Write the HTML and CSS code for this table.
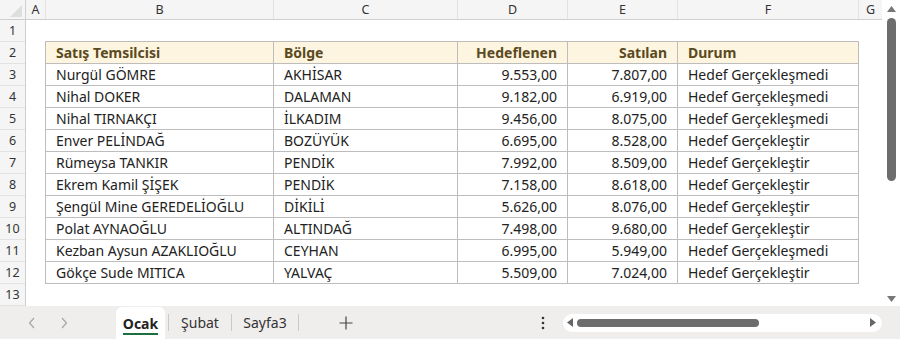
FILE: index.html
```html
<!DOCTYPE html>
<html lang="tr">
<head>
<meta charset="utf-8">
<link rel="stylesheet" href="styles.css">
</head>
<body>
<div class="app">
  <div class="top">
    <div class="grid">
      <div class="colheads">
        <div class="corner"><svg width="14" height="14" viewBox="0 0 14 14"><polygon points="13,1 13,13 1,13" fill="#dedede"/></svg></div>
        <div class="ch w-a">A</div>
        <div class="ch w-b">B</div>
        <div class="ch w-c">C</div>
        <div class="ch w-d">D</div>
        <div class="ch w-e">E</div>
        <div class="ch w-f">F</div>
        <div class="ch w-g">G</div>
      </div>
      <div class="body">
        <div class="rowheads">
          <div class="rh">1</div><div class="rh">2</div><div class="rh">3</div><div class="rh">4</div>
          <div class="rh">5</div><div class="rh">6</div><div class="rh">7</div><div class="rh">8</div>
          <div class="rh">9</div><div class="rh">10</div><div class="rh">11</div><div class="rh">12</div>
          <div class="rh">13</div>
        </div>
        <div class="cells">
          <div class="data">
            <div class="c hd">Satış Temsilcisi</div><div class="c hd">Bölge</div><div class="c hd num">Hedeflenen</div><div class="c hd num">Satılan</div><div class="c hd">Durum</div>
            <div class="c">Nurgül GÖMRE</div><div class="c">AKHİSAR</div><div class="c num">9.553,00</div><div class="c num">7.807,00</div><div class="c">Hedef Gerçekleşmedi</div>
            <div class="c">Nihal DOKER</div><div class="c">DALAMAN</div><div class="c num">9.182,00</div><div class="c num">6.919,00</div><div class="c">Hedef Gerçekleşmedi</div>
            <div class="c">Nihal TIRNAKÇI</div><div class="c">İLKADIM</div><div class="c num">9.456,00</div><div class="c num">8.075,00</div><div class="c">Hedef Gerçekleşmedi</div>
            <div class="c">Enver PELİNDAĞ</div><div class="c">BOZÜYÜK</div><div class="c num">6.695,00</div><div class="c num">8.528,00</div><div class="c">Hedef Gerçekleştir</div>
            <div class="c">Rümeysa TANKIR</div><div class="c">PENDİK</div><div class="c num">7.992,00</div><div class="c num">8.509,00</div><div class="c">Hedef Gerçekleştir</div>
            <div class="c">Ekrem Kamil ŞİŞEK</div><div class="c">PENDİK</div><div class="c num">7.158,00</div><div class="c num">8.618,00</div><div class="c">Hedef Gerçekleştir</div>
            <div class="c">Şengül Mine GEREDELİOĞLU</div><div class="c">DİKİLİ</div><div class="c num">5.626,00</div><div class="c num">8.076,00</div><div class="c">Hedef Gerçekleştir</div>
            <div class="c">Polat AYNAOĞLU</div><div class="c">ALTINDAĞ</div><div class="c num">7.498,00</div><div class="c num">9.680,00</div><div class="c">Hedef Gerçekleştir</div>
            <div class="c">Kezban Aysun AZAKLIOĞLU</div><div class="c">CEYHAN</div><div class="c num">6.995,00</div><div class="c num">5.949,00</div><div class="c">Hedef Gerçekleşmedi</div>
            <div class="c">Gökçe Sude MITICA</div><div class="c">YALVAÇ</div><div class="c num">5.509,00</div><div class="c num">7.024,00</div><div class="c">Hedef Gerçekleştir</div>
          </div>
        </div>
      </div>
    </div>
    <div class="vscroll">
      <div class="vtrack">
        <svg class="arrow-up" width="9" height="6" viewBox="0 0 9 6"><polygon points="4.5,0 9,6 0,6" fill="#777"/></svg>
        <div class="vthumb"></div>
        <div class="vspace"></div>
        <svg class="arrow-down" width="9" height="6" viewBox="0 0 9 6"><polygon points="0,0 9,0 4.5,6" fill="#777"/></svg>
      </div>
    </div>
  </div>
  <div class="tabbar">
    <div class="nav">
      <svg width="8" height="12" viewBox="0 0 8 12"><polyline points="6,1 1.5,6 6,11" fill="none" stroke="#a6a6a6" stroke-width="1.2"/></svg>
      <svg width="8" height="12" viewBox="0 0 8 12"><polyline points="2,1 6.5,6 2,11" fill="none" stroke="#a6a6a6" stroke-width="1.2"/></svg>
    </div>
    <div class="tab active"><span class="tab-label">Ocak</span></div>
    <div class="sep"></div>
    <div class="tab w-subat">Şubat</div>
    <div class="sep"></div>
    <div class="tab w-sayfa">Sayfa3</div>
    <div class="sep"></div>
    <div class="plus"><svg width="14" height="14" viewBox="0 0 14 14"><path d="M7 0.5V13.5M0.5 7H13.5" stroke="#444" stroke-width="1.2"/></svg></div>
    <div class="dots"><svg width="4" height="14" viewBox="0 0 4 14"><circle cx="2" cy="2" r="1.3" fill="#333"/><circle cx="2" cy="7" r="1.3" fill="#333"/><circle cx="2" cy="12" r="1.3" fill="#333"/></svg></div>
    <div class="hscroll">
      <svg width="6" height="9" viewBox="0 0 6 9"><polygon points="0,4.5 6,0 6,9" fill="#666"/></svg>
      <div class="hthumb"></div>
      <div class="hspace"></div>
      <svg width="6" height="9" viewBox="0 0 6 9"><polygon points="6,4.5 0,0 0,9" fill="#666"/></svg>
    </div>
  </div>
</div>
</body>
</html>
```
FILE: styles.css
```css
* { box-sizing: border-box; }
html, body { margin: 0; padding: 0; }
body {
  font-family: "Noto Sans", "Open Sans", sans-serif;
  color: #222;
  background: #fff;
}
.app {
  width: 900px;
  height: 339px;
  display: flex;
  flex-direction: column;
  background: #f0eded;
}
.top {
  height: 306px;
  display: flex;
}
.grid {
  width: 882px;
  background: #fff;
  display: flex;
  flex-direction: column;
}
.colheads {
  height: 20px;
  display: flex;
  background: #f5f5f5;
  border-bottom: 1px solid #cfcfcf;
}
.corner {
  width: 26px;
  border-right: 1px solid #cfcfcf;
  display: flex;
  align-items: flex-start;
  justify-content: flex-end;
  padding: 4px 2px 0 0;
}
.ch {
  height: 19px;
  font-size: 12.5px;
  line-height: 19px;
  text-align: center;
  color: #333;
  border-right: 1px solid #e2e2e2;
}
.w-a { width: 20px; }
.w-b { width: 228px; }
.w-c { width: 184px; }
.w-d { width: 110px; }
.w-e { width: 110px; }
.w-f { width: 181px; }
.w-g { flex: 1; border-right: none; }
.body {
  flex: 1;
  display: flex;
  overflow: hidden;
}
.rowheads {
  width: 26px;
  background: #f5f5f5;
  border-right: 1px solid #cfcfcf;
  display: flex;
  flex-direction: column;
}
.rh {
  height: 22px;
  flex: none;
  font-size: 12.5px;
  line-height: 21px;
  text-align: center;
  color: #333;
  border-bottom: 1px solid #e2e2e2;
}
.cells {
  flex: 1;
  padding: 21px 0 0 19px;
}
.data {
  display: grid;
  grid-template-columns: 228px 184px 110px 110px 181px;
  grid-auto-rows: 22px;
  width: 814px;
  border-top: 1px solid #bdbdbd;
  border-left: 1px solid #bdbdbd;
}
.c {
  border-right: 1px solid #bdbdbd;
  border-bottom: 1px solid #bdbdbd;
  font-size: 14px;
  line-height: 21px;
  padding: 0 10px;
  white-space: nowrap;
  overflow: hidden;
}
.hd {
  background: #fdf5e0;
  color: #5b4a1e;
  font-weight: 700;
}
.num { text-align: right; }
.vscroll {
  width: 18px;
  background: #fff;
  padding: 1px 2px 0 2px;
}
.vtrack {
  height: 100%;
  display: flex;
  flex-direction: column;
  align-items: center;
  padding: 5px 0 4px;
}
.vthumb {
  margin-top: 6px;
  width: 9px;
  height: 163px;
  border-radius: 5px;
  background: #6d6d6d;
}
.vspace { flex: 1; }
.tabbar {
  flex: 1;
  display: flex;
  align-items: stretch;
  font-size: 14px;
  color: #333;
}
.nav {
  width: 116px;
  display: flex;
  align-items: center;
  gap: 24px;
  padding-left: 28px;
}
.tab {
  display: flex;
  align-items: center;
  justify-content: center;
}
.tab.active {
  width: 49px;
  margin-top: 1px;
  background: #fff;
  border-radius: 6px 6px 0 0;
  font-weight: 700;
  color: #222;
  margin-right: 3px;
}
.tab-label {
  border-bottom: 2px solid #1e6f3f;
  line-height: 18px;
  margin-top: 4px;
}
.w-subat { width: 62px; }
.w-sayfa { width: 66px; }
.sep {
  width: 1px;
  height: 17px;
  align-self: center;
  background: #cbc8c8;
}
.plus {
  width: 94px;
  display: flex;
  align-items: center;
  justify-content: center;
}
.dots {
  width: 20px;
  display: flex;
  align-items: center;
  justify-content: center;
  margin-left: 140px;
}
.hscroll {
  width: 319px;
  height: 18px;
  align-self: center;
  margin-left: 10px;
  background: #fff;
  border-radius: 9px;
  display: flex;
  align-items: center;
  padding: 0 6px 0 4px;
}
.hthumb {
  margin-left: 4px;
  width: 182px;
  height: 8px;
  border-radius: 4px;
  background: #6d6d6d;
}
.hspace { flex: 1; }
```
